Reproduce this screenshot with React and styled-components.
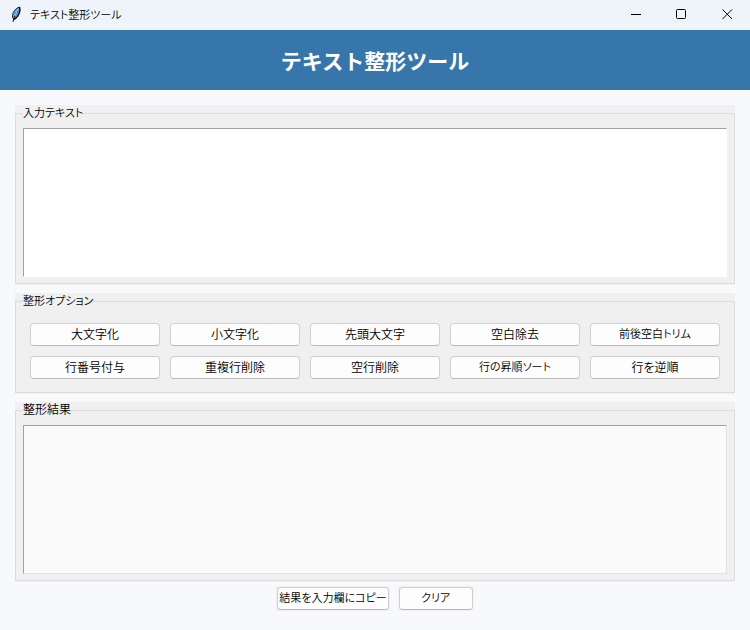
import React, { useState } from 'react';
import styled, { createGlobalStyle } from 'styled-components';

const GlobalStyle = createGlobalStyle`
  * {
    box-sizing: border-box;
  }

  body {
    margin: 0;
    background: #f8f9fd;
    color: #000;
    font-family: 'Noto Sans CJK JP', sans-serif;
    font-size: 12px;
    font-weight: 350;
    line-height: 16px;
    font-feature-settings: 'palt';
  }

  button, textarea {
    font: inherit;
    font-feature-settings: inherit;
    color: inherit;
  }
`;

// Window frame
const TitleBar = styled.header`
  display: flex;
  align-items: center;
  height: 30px;
  padding-left: 8px;
  background: #eff4fb;
`;

const WindowTitle = styled.span`
  flex: 1;
  margin-left: 6px;
  padding-bottom: 2px;
  font-size: 11px;
`;

const WindowButton = styled.button`
  display: flex;
  align-items: center;
  justify-content: center;
  width: 46px;
  height: 30px;
  padding: 0 0 2px;
  border: 0;
  background: transparent;
`;

const Banner = styled.div`
  display: flex;
  align-items: center;
  justify-content: center;
  height: 60px;
  background: #3776ab;
`;

const BannerTitle = styled.h1`
  margin: 0;
  color: #fff;
  font-size: 21px;
  line-height: 30px;
  font-weight: 700;
  font-feature-settings: normal;
`;

const Main = styled.main`
  display: flex;
  flex-direction: column;
  gap: 8px;
  padding: 15px 15px 4px;
`;

// Label frame: the grey area also covers the upper half of the legend
const Panel = styled.section`
  padding-bottom: 1px;
  background: #f0f0f0;
`;

const Frame = styled.fieldset`
  min-width: 0;
  margin: 0;
  padding: 7px 7px 6px;
  border: 1px solid #dcdcdc;
`;

const Legend = styled.legend`
  padding: 0 0 2px;
  font-size: ${({ $compact }) => ($compact ? '11px' : '12px')};
  line-height: 14px;
`;

const TextBox = styled.textarea`
  display: block;
  width: 100%;
  height: 149px;
  padding: 4px;
  border: 1px solid;
  border-color: ${({ readOnly }) =>
    readOnly ? '#a0a0a0 #e3e3e3 #e3e3e3 #a0a0a0' : '#a0a0a0 #fff #fff #a0a0a0'};
  border-radius: 0;
  background: ${({ readOnly }) => (readOnly ? '#fafafa' : '#fff')};
  outline: 0;
  resize: none;
`;

const OptionGrid = styled.div`
  display: grid;
  grid-template-columns: repeat(5, 1fr);
  gap: 10px;
  padding: 7px;
`;

const Button = styled.button`
  min-width: ${({ $minWidth }) => $minWidth || '0'};
  height: 23px;
  padding: 0 1px 2px;
  border: 1px solid #d0d0d0;
  border-bottom-color: #b9b9b9;
  border-radius: 4px;
  background: #fdfdfd;
  font-size: ${({ $compact }) => ($compact ? '11px' : '12px')};
  line-height: 19px;
  white-space: nowrap;

  &:hover {
    background: #e0eef9;
    border-color: #0078d4;
  }
`;

const Actions = styled.div`
  display: flex;
  justify-content: center;
  gap: 8px;
`;

const ActionCell = styled.div`
  display: flex;
  padding: 1px;
  background: #f0f0f0;
`;

const FeatherIcon = () => (
  <svg width="16" height="18" viewBox="0 0 16 18" aria-hidden="true">
    <path d="M11.5 1C8 2 5.5 5 4.5 8.5L4.5 12L5.5 13.5C9 12 11.5 8 12 4Z" fill="#5a9ee0" />
    <path d="M11.5 1C8 2 5.5 5 4.5 8.5L4.5 12" fill="none" stroke="#24364c" />
    <path d="M11.5 1L12 4C11.5 8 9 12 5.5 13.5" fill="none" stroke="#0b0f16" strokeWidth="1.5" />
    <path d="M10 4L6 12L5 16" fill="none" stroke="#10161f" />
    <path d="M10 3L7 10" fill="none" stroke="#a9d2fa" />
  </svg>
);

const lines = (text) => text.split('\n');

const options = [
  { label: '大文字化', run: (t) => t.toUpperCase() },
  { label: '小文字化', run: (t) => t.toLowerCase() },
  { label: '先頭大文字', run: (t) => t.toLowerCase().replace(/\b\w/g, (c) => c.toUpperCase()) },
  { label: '空白除去', run: (t) => t.replace(/[ \u3000]/g, '') },
  { label: '前後空白トリム', compact: true, run: (t) => lines(t).map((l) => l.trim()).join('\n') },
  { label: '行番号付与', run: (t) => lines(t).map((l, i) => `${i + 1}: ${l}`).join('\n') },
  { label: '重複行削除', run: (t) => [...new Set(lines(t))].join('\n') },
  { label: '空行削除', run: (t) => lines(t).filter((l) => l.trim()).join('\n') },
  { label: '行の昇順ソート', compact: true, run: (t) => lines(t).sort().join('\n') },
  { label: '行を逆順', run: (t) => lines(t).reverse().join('\n') },
];

const App = () => {
  const [input, setInput] = useState('');
  const [result, setResult] = useState('');

  const clear = () => {
    setInput('');
    setResult('');
  };

  return (
    <>
      <GlobalStyle />
      <TitleBar>
        <FeatherIcon />
        <WindowTitle>テキスト整形ツール</WindowTitle>
        <WindowButton type="button" aria-label="最小化">
          <svg width="11" height="11" viewBox="0 0 11 11">
            <path d="M1 5.5H11" stroke="#000" />
          </svg>
        </WindowButton>
        <WindowButton type="button" aria-label="最大化">
          <svg width="11" height="11" viewBox="0 0 11 11">
            <rect x="0.5" y="0.5" width="9" height="9" rx="1" fill="none" stroke="#000" />
          </svg>
        </WindowButton>
        <WindowButton type="button" aria-label="閉じる">
          <svg width="11" height="11" viewBox="0 0 11 11">
            <path d="M0.5 0.5L10 10M10 0.5L0.5 10" stroke="#000" />
          </svg>
        </WindowButton>
      </TitleBar>
      <Banner>
        <BannerTitle>テキスト整形ツール</BannerTitle>
      </Banner>
      <Main>
        <Panel>
          <Frame>
            <Legend id="input-legend" $compact>入力テキスト</Legend>
            <TextBox
              aria-labelledby="input-legend"
              value={input}
              onChange={(e) => setInput(e.target.value)}
            />
          </Frame>
        </Panel>
        <Panel>
          <Frame>
            <Legend $compact>整形オプション</Legend>
            <OptionGrid>
              {options.map(({ label, compact, run }) => (
                <Button
                  key={label}
                  type="button"
                  $compact={compact}
                  onClick={() => setResult(run(input))}
                >
                  {label}
                </Button>
              ))}
            </OptionGrid>
          </Frame>
        </Panel>
        <Panel>
          <Frame>
            <Legend id="result-legend">整形結果</Legend>
            <TextBox aria-labelledby="result-legend" value={result} readOnly />
          </Frame>
        </Panel>
      </Main>
      <Actions>
        <ActionCell>
          <Button type="button" $compact $minWidth="111px" onClick={() => setInput(result)}>
            結果を入力欄にコピー
          </Button>
        </ActionCell>
        <ActionCell>
          <Button type="button" $compact $minWidth="74px" onClick={clear}>
            クリア
          </Button>
        </ActionCell>
      </Actions>
    </>
  );
};

export default App;
